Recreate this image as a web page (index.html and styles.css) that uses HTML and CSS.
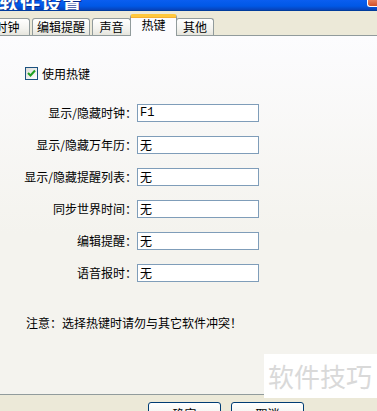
FILE: index.html
```html
<!DOCTYPE html>
<html lang="zh-CN">
<head>
<meta charset="utf-8">
<link rel="stylesheet" href="styles.css">
</head>
<body>
<div class="dialog">
  <div class="titlebar">
    <span class="title">软件设置</span>
    <span class="close"></span>
  </div>
  <div class="tabstrip">
    <div class="tab t1">时钟</div>
    <div class="tab t2">编辑提醒</div>
    <div class="tab t3">声音</div>
    <div class="tab active t4">热键</div>
    <div class="tab t5">其他</div>
  </div>
  <div class="panel">
    <label class="check-row">
      <span class="checkbox">
        <svg width="9" height="9" viewBox="0 0 9 9"><path d="M1 4 L3.5 6.5 L8 1.5" fill="none" stroke="#21a121" stroke-width="2"/></svg>
      </span>
      <span class="check-label">使用热键</span>
    </label>
    <div class="form">
      <span class="lbl">显示/隐藏时钟：</span><input class="field" type="text" value="F1">
      <span class="lbl">显示/隐藏万年历：</span><input class="field" type="text" value="无">
      <span class="lbl">显示/隐藏提醒列表：</span><input class="field" type="text" value="无">
      <span class="lbl">同步世界时间：</span><input class="field" type="text" value="无">
      <span class="lbl">编辑提醒：</span><input class="field" type="text" value="无">
      <span class="lbl">语音报时：</span><input class="field" type="text" value="无">
    </div>
    <p class="note">注意：选择热键时请勿与其它软件冲突！</p>
  </div>
  <div class="footer">
    <button class="btn">确定</button>
    <button class="btn">取消</button>
  </div>
  <div class="watermark">软件技巧</div>
</div>
</body>
</html>
```
FILE: styles.css
```css
* { box-sizing: border-box; }
html, body { margin: 0; padding: 0; }
body {
  width: 377px;
  height: 411px;
  overflow: hidden;
  background: #ece9d8;
  font-family: "Noto Sans CJK SC", "Noto Sans", sans-serif;
  font-size: 12px;
  color: #000;
}
.dialog { position: relative; width: 377px; height: 411px; overflow: hidden; }

.titlebar {
  height: 11px;
  display: flex;
  justify-content: space-between;
  align-items: flex-end;
  overflow: hidden;
  background: linear-gradient(#0a5ef0, #0058e6 60%, #0842b8);
  border-bottom: 1px solid #003c9c;
}
.title {
  color: #fff;
  font-weight: bold;
  font-size: 20px;
  line-height: 20px;
  margin-left: -1px;
  margin-bottom: -3px;
  letter-spacing: 1px;
  text-shadow: 1px 1px 0 #0a2a8a;
}
.close {
  align-self: flex-start;
  width: 10px;
  height: 7px;
  background: linear-gradient(#e8805c, #d2502a);
  border-left: 1px solid #fff;
  border-bottom: 1px solid #fff;
  border-bottom-left-radius: 3px;
}

.tabstrip {
  height: 24px;
  display: flex;
  align-items: flex-end;
}
.tab {
  height: 17px;
  border: 1px solid #919b9c;
  border-bottom: none;
  border-radius: 3px 3px 0 0;
  background: linear-gradient(#ffffff, #f3f3ef 60%, #e6e5dd);
  text-align: center;
  line-height: 16px;
  white-space: nowrap;
  overflow: hidden;
}
.t1 { width: 45px; margin-left: -15px; margin-right: 2px; }
.t2 { width: 58px; margin-right: 2px; }
.t3 { width: 39px; margin-right: -1px; }
.t4 { width: 47px; }
.t5 { width: 38px; margin-left: -1px; }
.tab.active {
  height: 22px;
  margin-bottom: -1px;
  position: relative;
  z-index: 1;
  background: #fcfcfe;
  border-top: 3px solid #ffc83c;
  box-shadow: inset 0 1px 0 #f5b032;
  line-height: 16px;
}

.panel {
  height: 360px;
  border-top: 1px solid #919b9c;
  border-bottom: 1px solid #919b9c;
  background: linear-gradient(#fcfcfe, #f4f3ee 55%, #f4f3ee);
  padding-top: 31px;
}
.check-row {
  display: flex;
  align-items: center;
  height: 13px;
  padding-left: 25px;
}
.checkbox {
  width: 13px;
  height: 13px;
  border: 1px solid #1c5180;
  background: linear-gradient(135deg, #dcdcd7, #ffffff);
  display: flex;
  align-items: center;
  justify-content: center;
}
.check-label { margin-left: 4px; line-height: 13px; }

.form {
  margin-top: 24px;
  display: grid;
  grid-template-columns: 137px 122px;
  grid-auto-rows: 18px;
  row-gap: 14px;
}
.lbl {
  text-align: right;
  line-height: 18px;
  white-space: nowrap;
}
.field {
  width: 122px;
  height: 18px;
  margin: 0;
  border: 1px solid #7f9db9;
  background: #fff;
  padding: 0 2px;
  font-family: "Liberation Mono", "Noto Sans CJK SC", monospace;
  font-size: 12px;
  line-height: 16px;
  color: #000;
  outline: none;
}
.note {
  margin: 34px 0 0 26px;
  line-height: 14px;
}

.footer {
  display: flex;
  gap: 10px;
  padding: 7px 0 0 148px;
}
.btn {
  width: 73px;
  height: 23px;
  border: 1px solid #003c74;
  border-radius: 3px;
  background: linear-gradient(#ffffff, #f0f0ea 70%, #d6d0c5);
  font-family: "Noto Sans CJK SC", sans-serif;
  font-size: 12px;
  padding: 0;
  color: #000;
}

.watermark {
  position: absolute;
  left: 264px;
  top: 354px;
  width: 113px;
  height: 44px;
  background: #fff;
  color: #d9d9d9;
  font-size: 26px;
  line-height: 44px;
  padding-left: 4px;
  white-space: nowrap;
}
```
